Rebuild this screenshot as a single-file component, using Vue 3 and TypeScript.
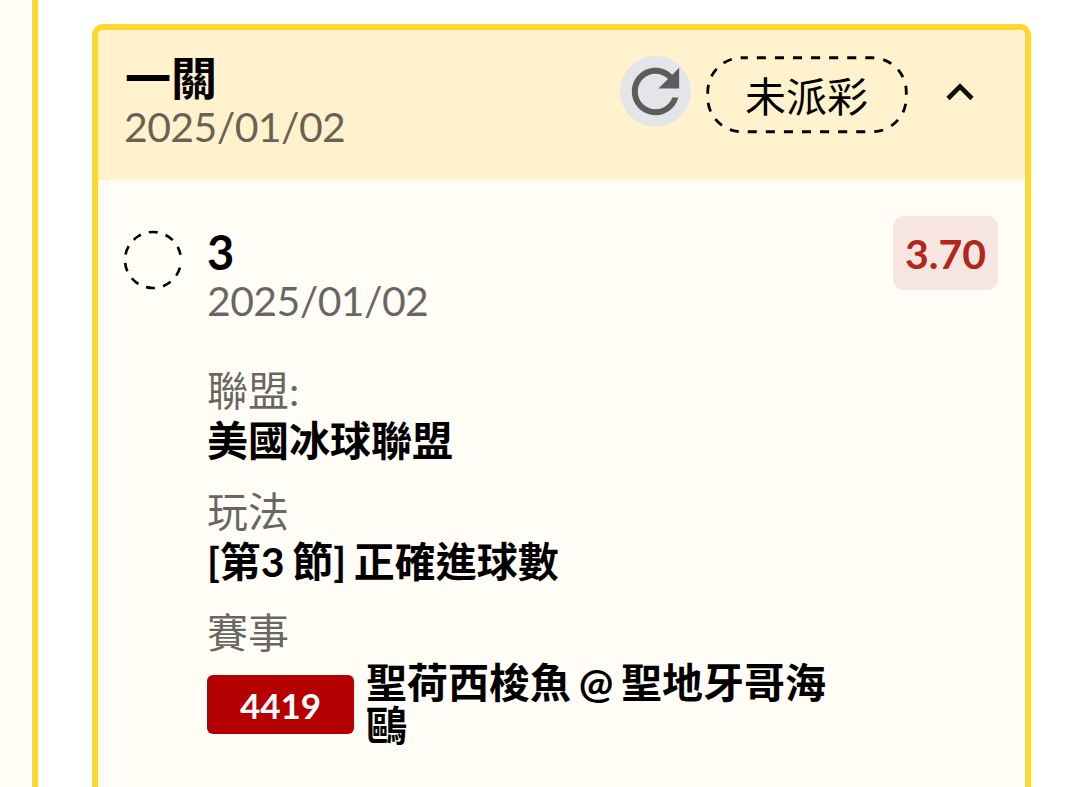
<script setup lang="ts">
import { ref } from "vue";

interface Detail {
    label: string;
    value: string;
    code?: string;
}

const expanded = ref(true);

const ticket = {
    title: "一關",
    date: "2025/01/02",
    status: "未派彩",
};

const bet = {
    pick: "3",
    date: "2025/01/02",
    odds: "3.70",
};

const details: Detail[] = [
    { label: "聯盟:", value: "美國冰球聯盟" },
    { label: "玩法", value: "[第3 節] 正確進球數" },
    { label: "賽事", value: "聖荷西梭魚 @ 聖地牙哥海鷗", code: "4419" },
];
</script>

<template>
    <div class="page">
        <aside class="rail"></aside>
        <main class="content">
            <section class="ticket">
                <header class="ticket-header">
                    <div class="heading">
                        <h2 class="title">{{ ticket.title }}</h2>
                        <p class="date">{{ ticket.date }}</p>
                    </div>
                    <button class="refresh" type="button" aria-label="refresh">
                        <svg viewBox="0 0 24 24">
                            <path d="M17.65 6.35C16.2 4.9 14.21 4 12 4c-4.42 0-7.99 3.58-7.99 8s3.57 8 7.99 8c3.73 0 6.84-2.55 7.73-6h-2.08c-.82 2.33-3.04 4-5.65 4-3.31 0-6-2.69-6-6s2.69-6 6-6c1.66 0 3.14.69 4.22 1.78L13 11h7V4l-2.35 2.35z" />
                        </svg>
                    </button>
                    <div class="status">
                        <svg class="status-outline" viewBox="0 0 202 78">
                            <rect x="1.75" y="1.75" width="198.5" height="74" rx="34" />
                        </svg>
                        <span>{{ ticket.status }}</span>
                    </div>
                    <button class="toggle" type="button" aria-label="toggle" @click="expanded = !expanded">
                        <svg viewBox="0 0 28 20" :class="{ flipped: !expanded }">
                            <path d="M2 16.5 14 4.5 26 16.5" />
                        </svg>
                    </button>
                </header>

                <div class="bet" v-if="expanded">
                    <svg class="pending" viewBox="0 0 60 60">
                        <path d="M56.92 37.72A28 28 0 1 1 57.49 24.66" />
                    </svg>
                    <div class="bet-body">
                        <h3 class="pick">{{ bet.pick }}</h3>
                        <p class="date">{{ bet.date }}</p>
                        <dl class="details">
                            <div class="detail" v-for="item in details" :key="item.label">
                                <dt>{{ item.label }}</dt>
                                <dd :class="{ match: item.code }">
                                    <span class="code" v-if="item.code">{{ item.code }}</span>
                                    <span>{{ item.value }}</span>
                                </dd>
                            </div>
                        </dl>
                    </div>
                    <span class="odds">{{ bet.odds }}</span>
                </div>
            </section>
        </main>
    </div>
</template>

<style>
body {
    background: #fff;
    overflow: hidden;
}
</style>

<style scoped>
.page {
    display: flex;
    height: 787px;
    overflow: hidden;
    font-family: Lato, "Noto Sans CJK TC", sans-serif;
    font-size: 41px;
    color: #000;
}

.page * {
    box-sizing: border-box;
}

h2,
h3,
p,
dl,
dd {
    margin: 0;
}

button {
    border: none;
    padding: 0;
    cursor: pointer;
}

.rail {
    width: 38px;
    flex: none;
    background: #fffdf5;
    border-right: 6px solid #fdd830;
}

.content {
    flex: 1;
    padding: 24px 49px 0 54px;
}

.ticket {
    height: 800px;
    border: 6px solid #fdd830;
    border-radius: 11px;
    background: #fffdf5;
    overflow: hidden;
}

.ticket-header {
    display: flex;
    align-items: flex-start;
    height: 150px;
    padding: 26px 51px 0 26px;
    background: #fff2cc;
}

.heading {
    flex: 1;
    margin-top: -2px;
}

.title {
    padding-left: 1px;
    font-size: 46px;
    font-weight: 700;
    line-height: 48px;
}

.date {
    line-height: 49px;
    letter-spacing: -0.6px;
    color: rgba(0, 0, 0, 0.6);
}

.refresh {
    width: 71px;
    height: 71px;
    margin-right: 15px;
    border-radius: 50%;
    background: #e4e5e8;
}

.refresh svg {
    display: block;
    width: 71px;
    height: 71px;
    fill: #5c5c5c;
}

.status {
    position: relative;
    width: 202px;
    height: 78px;
    text-align: center;
    line-height: 82px;
    text-indent: -1px;
}

.status-outline {
    position: absolute;
    inset: 0;
    fill: none;
    stroke: #000;
    stroke-width: 2.8;
    stroke-dasharray: 9.04 9.04;
    stroke-dashoffset: 3;
}

.toggle {
    width: 28px;
    height: 20px;
    margin: 26px 0 0 38px;
    background: none;
}

.toggle svg {
    display: block;
    fill: none;
    stroke: #111;
    stroke-width: 4.6;
}

.flipped {
    transform: rotate(180deg);
}

.bet {
    display: flex;
    align-items: flex-start;
    padding: 36px 27px 0 25px;
}

.pending {
    flex: none;
    width: 60px;
    height: 60px;
    margin-top: 14px;
    fill: none;
    stroke: #000;
    stroke-width: 2.6;
    stroke-dasharray: 8.8 8.3;
}

.bet-body {
    width: 640px;
    margin: 12px auto 0 24px;
}

.pick {
    font-size: 47px;
    font-weight: 700;
    line-height: 48px;
}

.details {
    margin-top: 40px;
}

.detail {
    margin-bottom: 20px;
}

dt {
    line-height: 51px;
    color: rgba(0, 0, 0, 0.6);
}

dd {
    font-weight: 700;
    line-height: 50px;
    word-spacing: -2.3px;
}

.match {
    display: flex;
    align-items: center;
    gap: 12px;
    padding-top: 3px;
    line-height: 43px;
}

.code {
    flex: none;
    width: 147px;
    height: 59px;
    border-radius: 6px;
    background: #b50000;
    color: #fff;
    font-size: 35px;
    line-height: 60px;
    text-align: center;
}

.odds {
    width: 105px;
    height: 74px;
    border-radius: 11px;
    background: #f7e6e0;
    color: #b3261e;
    font-weight: 700;
    line-height: 75px;
    text-align: center;
}
</style>
